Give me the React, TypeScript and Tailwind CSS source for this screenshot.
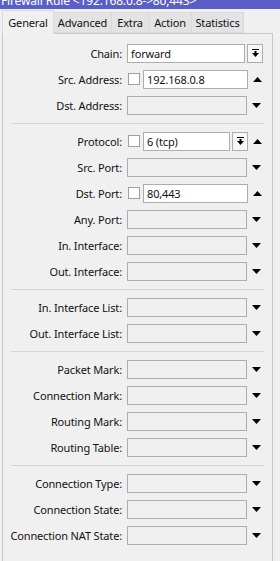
import type { ReactNode } from "react";

type Row =
  | { kind: "chain"; label: string; value: string }
  | { kind: "check"; label: string; value: string }
  | { kind: "proto"; label: string; value: string }
  | { kind: "empty"; label: string };

const sections: Row[][] = [
  [
    { kind: "chain", label: "Chain:", value: "forward" },
    { kind: "check", label: "Src. Address:", value: "192.168.0.8" },
    { kind: "empty", label: "Dst. Address:" },
  ],
  [
    { kind: "proto", label: "Protocol:", value: "6 (tcp)" },
    { kind: "empty", label: "Src. Port:" },
    { kind: "check", label: "Dst. Port:", value: "80,443" },
    { kind: "empty", label: "Any. Port:" },
    { kind: "empty", label: "In. Interface:" },
    { kind: "empty", label: "Out. Interface:" },
  ],
  [
    { kind: "empty", label: "In. Interface List:" },
    { kind: "empty", label: "Out. Interface List:" },
  ],
  [
    { kind: "empty", label: "Packet Mark:" },
    { kind: "empty", label: "Connection Mark:" },
    { kind: "empty", label: "Routing Mark:" },
    { kind: "empty", label: "Routing Table:" },
  ],
  [
    { kind: "empty", label: "Connection Type:" },
    { kind: "empty", label: "Connection State:" },
    { kind: "empty", label: "Connection NAT State:" },
  ],
];

const tabs = [
  { name: "General", w: "w-[52px]" },
  { name: "Advanced", w: "w-[58px]" },
  { name: "Extra", w: "w-[37px]" },
  { name: "Action", w: "w-[43px]" },
  { name: "Statistics", w: "w-[52px]" },
];

function Arrow({ up }: { up?: boolean }) {
  return (
    <div className="flex w-[19px] shrink-0 justify-center">
      <svg width="9" height="5" viewBox="0 0 9 5">
        <polygon points={up ? "0,5 9,5 4.5,0" : "0,0 9,0 4.5,5"} fill="#000" />
      </svg>
    </div>
  );
}

function DropButton() {
  return (
    <div className="flex h-[19px] w-[16px] shrink-0 items-center justify-center border border-[#adadad] bg-[#f7f7f7]">
      <svg width="7" height="8" viewBox="0 0 7 8">
        <rect x="0" y="0" width="7" height="1" fill="#000" />
        <rect x="2.5" y="2" width="2" height="2" fill="#000" />
        <polygon points="0,4 7,4 3.5,8" fill="#000" />
      </svg>
    </div>
  );
}

function Check() {
  return <div className="ml-[1px] mr-[3px] h-[12px] w-[12px] shrink-0 border border-[#a0a0a0] bg-white" />;
}

function Field({ value, className }: { value?: string; className: string }) {
  return (
    <div
      className={`flex h-[19px] shrink-0 items-center border border-[#adadad] pl-[3px] ${
        value !== undefined ? "bg-white" : "bg-[#f0f0f0]"
      } ${className}`}
    >
      {value}
    </div>
  );
}

function FormRow({ row }: { row: Row }) {
  let body: ReactNode;
  if (row.kind === "chain") {
    body = (
      <>
        <Field value={row.value} className="w-[118px]" />
        <div className="ml-[2px]">
          <DropButton />
        </div>
      </>
    );
  } else if (row.kind === "check") {
    body = (
      <>
        <Check />
        <Field value={row.value} className="w-[105px]" />
        <Arrow up />
      </>
    );
  } else if (row.kind === "proto") {
    body = (
      <>
        <Check />
        <Field value={row.value} className="w-[87px]" />
        <div className="ml-[2px]">
          <DropButton />
        </div>
        <Arrow up />
      </>
    );
  } else {
    body = (
      <>
        <Field className="w-[120px]" />
        <Arrow />
      </>
    );
  }
  return (
    <div className="flex h-[26px] items-center">
      <div className="flex w-[119px] shrink-0 justify-end whitespace-nowrap">{row.label}</div>
      <div className="ml-[5px] flex items-center">{body}</div>
    </div>
  );
}

export default function App() {
  return (
    <div className="h-[561px] w-[280px] overflow-hidden bg-[#f0f0f0] font-['Noto_Sans',sans-serif] text-[11px] leading-none tracking-[-0.15px] text-[#111]">
      <div className="h-[9px] overflow-hidden bg-[#5a5ec8]">
        <div className="-mt-[7px] whitespace-nowrap pl-[1px] text-[12px] leading-[16px] text-white">
          Firewall Rule &lt;192.168.0.8-&gt;80,443&gt;
        </div>
      </div>
      <div className="flex h-[24px] items-end pl-[2px]">
        {tabs.map((t, i) =>
          i === 0 ? (
            <div
              key={t.name}
              className={`relative z-10 -mb-px flex h-[24px] items-center justify-center border border-b-0 border-[#d9d9d9] bg-[#f0f0f0] ${t.w}`}
            >
              {t.name}
            </div>
          ) : (
            <div
              key={t.name}
              className={`flex h-[21px] items-center justify-center border border-l-0 border-[#d9d9d9] bg-[#e3e3e3] ${t.w}`}
            >
              {t.name}
            </div>
          )
        )}
      </div>
      <div className="ml-[2px] h-[600px] w-[271px] border border-[#c8c8c8] pt-[6px]">
        {sections.map((sec, si) => (
          <div key={si}>
            {si > 0 && (
              <div className="flex h-[10px] items-center px-[8px]">
                <div className="h-px w-full bg-[#d6d6d6]" />
              </div>
            )}
            {sec.map((r) => (
              <FormRow key={r.label} row={r} />
            ))}
          </div>
        ))}
      </div>
    </div>
  );
}
